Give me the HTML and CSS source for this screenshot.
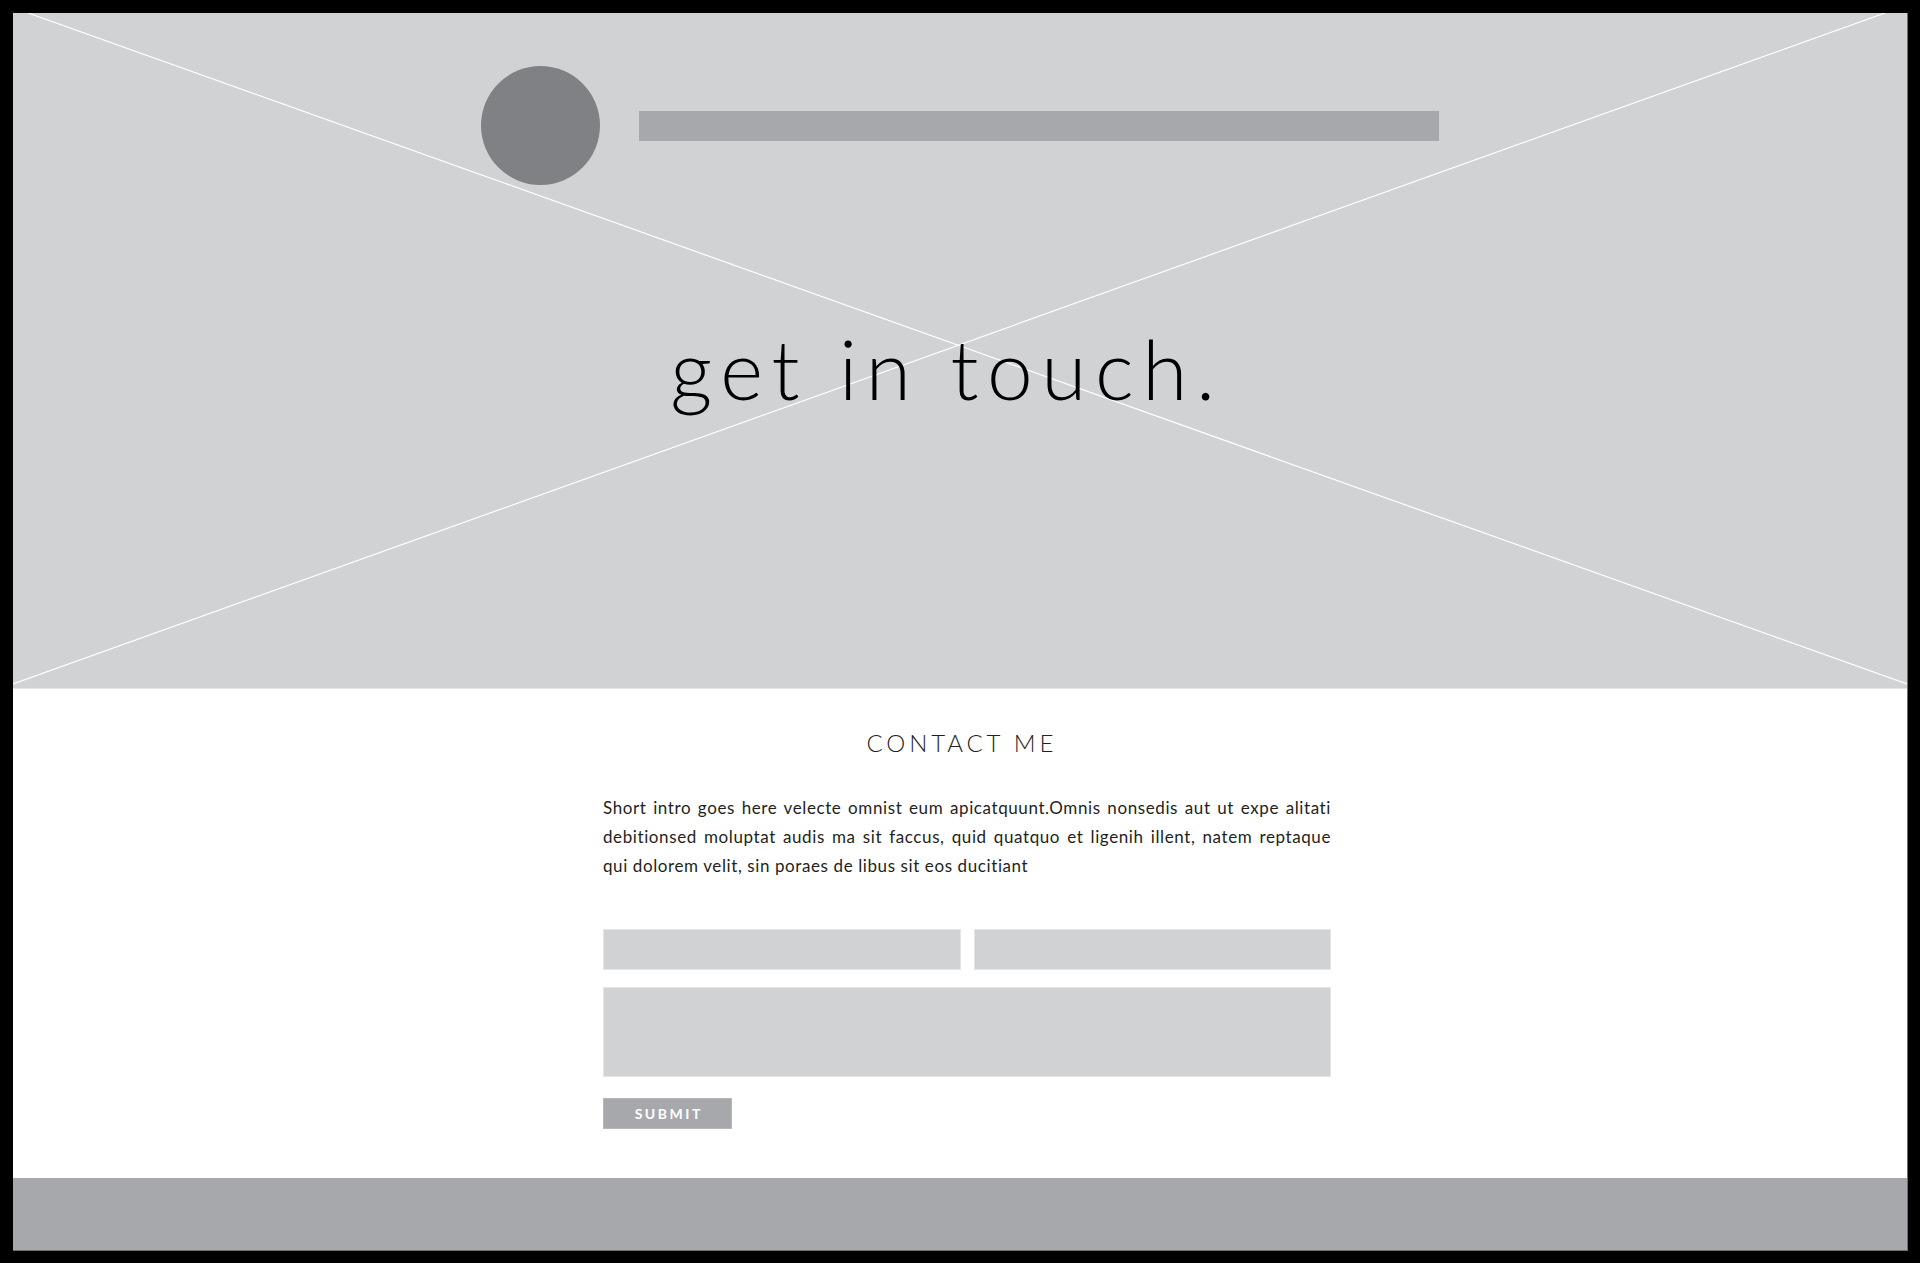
FILE: index.html
```html
<!DOCTYPE html>
<html lang="en">
<head>
<meta charset="utf-8">
<title>Get in touch</title>
<link rel="stylesheet" href="styles.css">
</head>
<body>
<div class="frame">
  <header class="hero">
    <svg class="hero-cross" viewBox="0 0 1894 675" preserveAspectRatio="none" aria-hidden="true">
      <line x1="15" y1="0" x2="1894" y2="671" />
      <line x1="1872" y1="0" x2="0" y2="671" />
    </svg>
    <div class="hero-top">
      <div class="logo-dot"></div>
      <div class="nav-bar"></div>
    </div>
    <h1 class="hero-title">get in touch.</h1>
  </header>
  <main class="contact">
    <h2 class="contact-title">CONTACT ME</h2>
    <div class="contact-inner">
      <p class="intro">
        <span class="intro-line">Short intro goes here velecte omnist eum apicatquunt.Omnis nonsedis aut ut expe alitati</span>
        <span class="intro-line">debitionsed moluptat audis ma sit faccus, quid quatquo et ligenih illent, natem reptaque</span>
        <span class="intro-line last">qui dolorem velit, sin poraes de libus sit eos ducitiant</span>
      </p>
      <form class="form">
        <div class="form-row">
          <input class="field" type="text" aria-label="Name">
          <input class="field" type="text" aria-label="Email">
        </div>
        <textarea class="field message" aria-label="Message"></textarea>
        <button class="submit" type="button">SUBMIT</button>
      </form>
    </div>
  </main>
  <footer class="footer"></footer>
</div>
</body>
</html>
```
FILE: styles.css
```css
html, body {
  margin: 0;
  padding: 0;
  background: #000;
}
body {
  font-family: Lato, "Open Sans", "Liberation Sans", sans-serif;
  color: #231f20;
}
.frame {
  margin: 13px 12px 12px 13px;
  background: #fff;
  border-right: 1px solid #6f7073;
  border-bottom: 1px solid #6f7073;
  display: flex;
  flex-direction: column;
}
.hero {
  position: relative;
  background: #d1d2d4;
  border-bottom: 1px solid #e6e7e8;
  display: flex;
  flex-direction: column;
  align-items: center;
  padding-top: 53px;
  box-sizing: content-box;
  height: 622px;
  overflow: hidden;
}
.hero-cross {
  position: absolute;
  left: 0;
  top: 0;
  width: 100%;
  height: 100%;
}
.hero-cross line {
  stroke: #ffffff;
  stroke-width: 1.2;
  vector-effect: non-scaling-stroke;
}
.hero-top {
  position: relative;
  display: flex;
  align-items: center;
  gap: 39px;
}
.logo-dot {
  width: 119px;
  height: 119px;
  border-radius: 50%;
  background: #808184;
}
.nav-bar {
  width: 800px;
  height: 30px;
  background: #a7a8ab;
}
.hero-title {
  position: relative;
  margin: 143px 0 0 0;
  padding-right: 26px;
  font-family: Lato, "Open Sans", sans-serif;
  font-weight: 300;
  font-size: 82px;
  line-height: 80px;
  letter-spacing: 0.105em;
  color: #000;
}
.contact {
  height: 489px;
  box-sizing: border-box;
  padding-top: 42px;
  display: flex;
  flex-direction: column;
  align-items: center;
}
.contact-title {
  margin: 0;
  font-weight: 300;
  font-size: 24px;
  line-height: 24px;
  letter-spacing: 0.16em;
  text-indent: 0.16em;
  color: #231f20;
}
.contact-inner {
  align-self: flex-start;
  width: 728px;
  margin-left: 590px;
  margin-top: 38px;
}
.intro {
  margin: 0;
  font-size: 17px;
  line-height: 29px;
  font-weight: 400;
  letter-spacing: 0.6px;
  color: #231f20;
}
.intro-line {
  display: block;
  text-align: justify;
  text-align-last: justify;
  white-space: nowrap;
}
.intro-line.last {
  text-align-last: left;
}
.form {
  margin-top: 49px;
  display: flex;
  flex-direction: column;
  align-items: flex-start;
}
.form-row {
  width: 100%;
  display: grid;
  grid-template-columns: 1fr 1fr;
  gap: 13px;
}
.field {
  display: block;
  box-sizing: border-box;
  margin: 0;
  width: 100%;
  height: 41px;
  background: #d1d2d4;
  border: 1px solid #e4e5e6;
  border-radius: 0;
  outline: none;
  font: inherit;
}
.message {
  margin-top: 17px;
  height: 90px;
  resize: none;
}
.submit {
  margin-top: 21px;
  width: 129px;
  height: 31px;
  padding: 0;
  border: 1px solid #b6b7b9;
  background: #a7a8ab;
  color: #fff;
  font-family: Lato, "Open Sans", sans-serif;
  font-weight: 700;
  font-size: 14px;
  letter-spacing: 0.18em;
  text-indent: 0.18em;
}
.footer {
  height: 72px;
  background: #a7a8ab;
}
```
